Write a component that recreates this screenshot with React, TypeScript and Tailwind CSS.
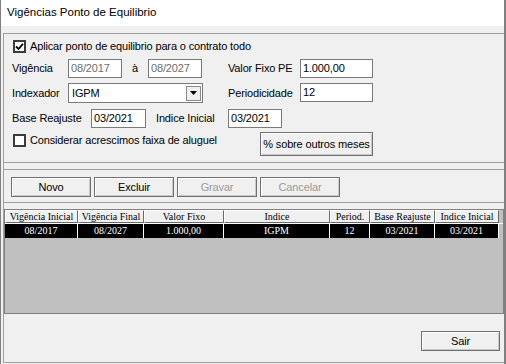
import React from 'react'

interface Column {
  title: string
  value: string
  width: string
}

const columns: Column[] = [
  { title: 'Vigência Inicial', value: '08/2017', width: 'w-[73px]' },
  { title: 'Vigência Final', value: '08/2027', width: 'w-[66px]' },
  { title: 'Valor Fixo', value: '1.000,00', width: 'w-[80px]' },
  { title: 'Indice', value: 'IGPM', width: 'w-[106px]' },
  { title: 'Period.', value: '12', width: 'w-[40px]' },
  { title: 'Base Reajuste', value: '03/2021', width: 'w-[65px]' },
  { title: 'Indice Inicial', value: '03/2021', width: 'w-[64px]' },
]

function Input({ value, className = '', disabled = false }: { value: string; className?: string; disabled?: boolean }) {
  return (
    <div
      className={`h-[19px] bg-white border border-[#7a7a7a] flex items-center pl-[2px] ${
        disabled ? 'text-[#6d6d6d]' : 'text-black'
      } ${className}`}
    >
      {value}
    </div>
  )
}

function Button({ label, className = '', disabled = false }: { label: string; className?: string; disabled?: boolean }) {
  return (
    <div
      className={`h-[20px] border border-[#707070] bg-[#f0f0f0] shadow-[inset_1px_1px_0_#ffffff,inset_-1px_-1px_0_#c8c8c8] flex items-center justify-center ${
        disabled ? 'text-[#9a9a9a]' : 'text-black'
      } ${className}`}
    >
      {label}
    </div>
  )
}

function Checkbox({ checked }: { checked: boolean }) {
  return (
    <div className="w-[13px] h-[13px] border-2 border-[#3c3c3c] bg-white flex items-center justify-center shrink-0">
      {checked && (
        <svg width="9" height="9" viewBox="0 0 9 9">
          <path d="M1 4.5 L3.5 7 L8 1.8" fill="none" stroke="#000" strokeWidth="1.8" />
        </svg>
      )}
    </div>
  )
}

export default function App() {
  return (
    <div className="w-[506px] h-[364px] bg-[#f0f0f0] border-l border-r-2 border-[#808080] flex flex-col font-['Liberation_Sans',Arial,sans-serif] text-[11px] tracking-[-0.15px] text-black leading-none overflow-hidden">
      {/* title */}
      <div className="h-[26px] shrink-0 bg-white flex items-center pl-[6px] text-[11.5px] tracking-normal">
        Vigências Ponto de Equilibrio
      </div>

      <div className="mt-[7px] ml-[2px] h-[330px] shrink-0 border-t border-l border-b border-[#a0a0a0] flex flex-col">
        {/* dados */}
        <div className="h-[129px] shrink-0 border-b border-[#a0a0a0] pt-[6px] flex flex-col">
          <div className="h-[13px] flex items-center pl-[9px] gap-[4px]">
            <Checkbox checked />
            <span>Aplicar ponto de equilibrio para o contrato todo</span>
          </div>

          <div className="h-[19px] mt-[6px] flex items-center pl-[8px]">
            <span className="w-[56px]">Vigência</span>
            <Input value="08/2017" disabled className="w-[54px]" />
            <span className="w-[26px] pl-[10px]">à</span>
            <Input value="08/2027" disabled className="w-[54px]" />
            <span className="ml-[26px] w-[72px]">Valor Fixo PE</span>
            <Input value="1.000,00" className="w-[73px]" />
          </div>

          <div className="h-[20px] mt-[5px] flex items-start pl-[8px]">
            <span className="w-[56px] self-center">Indexador</span>
            <div className="w-[135px] h-[20px] bg-white border border-[#7a7a7a] flex items-center pl-[3px] pr-[1px]">
              <span className="flex-1">IGPM</span>
              <div className="w-[15px] h-[15px] border border-[#8a8a8a] bg-[#f0f0f0] flex items-center justify-center">
                <svg width="7" height="4" viewBox="0 0 7 4">
                  <path d="M0 0 H7 L3.5 4 Z" fill="#000" />
                </svg>
              </div>
            </div>
            <span className="ml-[25px] w-[72px] self-center">Periodicidade</span>
            <Input value="12" className="w-[73px]" />
          </div>

          <div className="h-[19px] mt-[6px] flex items-center pl-[8px]">
            <span className="w-[79px]">Base Reajuste</span>
            <Input value="03/2021" className="w-[55px]" />
            <span className="ml-[10px] w-[72px]">Indice Inicial</span>
            <Input value="03/2021" className="w-[54px]" />
          </div>

          <div className="h-[24px] mt-[4px] flex items-start pl-[9px]">
            <div className="w-[247px] h-[13px] mt-[2px] flex items-center gap-[4px]">
              <Checkbox checked={false} />
              <span>Considerar acrescimos faixa de aluguel</span>
            </div>
            <Button label="% sobre outros meses" className="w-[113px] h-[24px]" />
          </div>
        </div>

        <div className="h-[6px] shrink-0" />

        {/* botões */}
        <div className="h-[34px] shrink-0 border-t border-b border-[#a0a0a0] flex items-start pt-[7px] pl-[7px] gap-[3px]">
          <Button label="Novo" className="w-[80px]" />
          <Button label="Excluir" className="w-[80px]" />
          <Button label="Gravar" disabled className="w-[80px]" />
          <Button label="Cancelar" disabled className="w-[80px]" />
        </div>

        <div className="h-[6px] shrink-0" />

        {/* grade */}
        <div className="h-[105px] shrink-0 bg-[#c0c0c0] border border-[#808080] flex flex-col font-['Liberation_Serif','Times_New_Roman',serif] text-[10px] tracking-normal">
          <div className="h-[13px] flex">
            {columns.map((c) => (
              <div
                key={c.title}
                className={`${c.width} h-full bg-[#f0f0f0] border-t border-l border-white border-r border-b border-r-[#696969] border-b-[#696969] flex items-center justify-center`}
              >
                {c.title}
              </div>
            ))}
          </div>
          <div className="h-[15px] flex border-t border-white">
            {columns.map((c) => (
              <div
                key={c.title}
                className={`${c.width} h-full bg-black text-white border-r border-white flex items-center justify-center`}
              >
                {c.value}
              </div>
            ))}
          </div>
        </div>

        {/* rodapé */}
        <div className="flex-1 flex justify-end items-start pt-[17px] pr-[4px]">
          <Button label="Sair" className="w-[79px]" />
        </div>
      </div>
    </div>
  )
}
